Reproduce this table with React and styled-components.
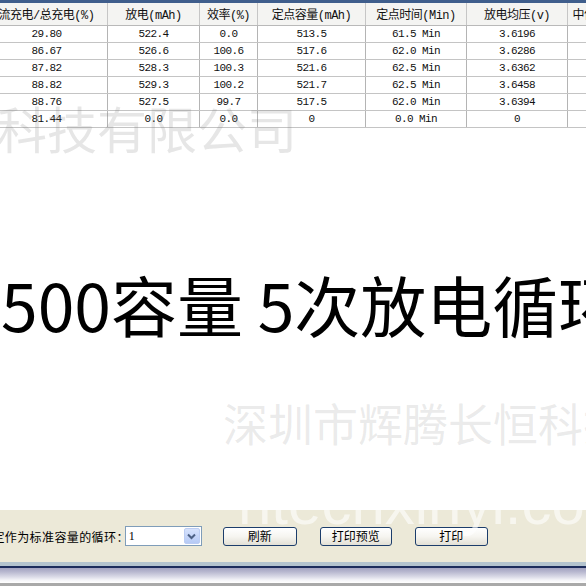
import React from 'react'
import styled, { createGlobalStyle } from 'styled-components'

const GlobalStyle = createGlobalStyle`
	html, body {
		margin: 0;
		padding: 0;
		background: #fff;
	}
	body {
		font-family: 'Noto Sans CJK SC', sans-serif;
	}
`

const COLS = '122px 92px 58px 108px 101px 101px 76px'

const Page = styled.div`
	position: relative;
	width: 586px;
	height: 586px;
	overflow: hidden;
	display: flex;
	flex-direction: column;
	background: #fff;
`

const TopLine = styled.div`
	height: 3px;
	background: #3f5e8c;
	flex: none;
`

const Grid = styled.div`
	margin-left: -14px;
	flex: none;
`

const HeaderRow = styled.div`
	display: grid;
	grid-template-columns: ${COLS};
	height: 23px;
	box-sizing: border-box;
	background: #f4f4f2;
	border-bottom: 1px solid #b9b9b9;
`

const HeadCell = styled.div`
	display: flex;
	align-items: center;
	justify-content: center;
	border-right: 1px solid #c6c6c6;
	font-family: 'Liberation Mono', 'Noto Sans CJK SC', monospace;
	font-size: 12px;
	letter-spacing: -0.5px;
	color: #111;
	white-space: nowrap;
	overflow: hidden;
`

const DataRow = styled.div`
	display: grid;
	grid-template-columns: ${COLS};
	height: 17px;
	box-sizing: border-box;
	border-bottom: 1px solid #c4c4c4;
`

const Cell = styled.div`
	display: flex;
	align-items: center;
	justify-content: center;
	border-right: 1px solid #b4b4b4;
	font-family: 'Liberation Mono', monospace;
	font-size: 11px;
	letter-spacing: -0.6px;
	color: #111;
	white-space: nowrap;
	overflow: hidden;
`

const Canvas = styled.div`
	flex: 1;
	padding-top: 142px;
	box-sizing: border-box;
`

const BigText = styled.div`
	font-family: 'Noto Sans CJK SC', sans-serif;
	font-size: 66px;
	line-height: 1;
	color: #000;
	white-space: nowrap;
	margin-left: 1px;
`

const Toolbar = styled.div`
	height: 52px;
	flex: none;
	background: #ece9d8;
	display: flex;
	align-items: center;
	font-size: 12px;
	color: #000;
`

const Label = styled.span`
	margin-left: -20px;
	margin-right: -4px;
	white-space: nowrap;
	font-family: 'Noto Sans CJK SC', sans-serif;
	font-size: 12px;
	letter-spacing: 0.4px;
`

const Select = styled.div`
	width: 77px;
	height: 20px;
	box-sizing: border-box;
	border: 1px solid #7f9db9;
	background: #fff;
	display: flex;
	align-items: center;
	justify-content: space-between;
	padding: 0 1px 0 3px;
	font-family: 'Liberation Serif', serif;
	font-size: 12px;
	margin-right: 21px;
`

const Arrow = styled.div`
	width: 16px;
	height: 16px;
	box-sizing: border-box;
	border: 1px solid #bccdf3;
	border-radius: 2px;
	background: linear-gradient(#d6e2fc, #b6caf5);
	display: flex;
	align-items: center;
	justify-content: center;
`

const Button = styled.button`
	width: ${p => p.$w}px;
	height: 19px;
	margin-right: 23px;
	padding: 0;
	box-sizing: border-box;
	border: 1px solid #1c3d6b;
	border-radius: 3px;
	background: linear-gradient(#ffffff 0%, #f6f5f0 50%, #e3e0d6 100%);
	font-family: 'Noto Sans CJK SC', sans-serif;
	font-size: 12px;
	line-height: 1;
	color: #000;
`

const BottomFrame = styled.div`
	flex: none;
	height: 24px;
	background: linear-gradient(
		#b3c3ce 0px,
		#b3c3ce 4px,
		#1c2c5c 4px,
		#1c2c5c 6px,
		#a2a2c0 6px,
		#b9b9d0 10px,
		#dcdce8 15px,
		#f4f4f8 18px,
		#ffffff 21px,
		#a9a9a9 21px,
		#a9a9a9 24px
	);
`

const Watermark = styled.div`
	position: absolute;
	top: ${p => p.$top}px;
	left: ${p => p.$left}px;
	font-size: ${p => p.$size}px;
	font-family: ${p => (p.$latin ? "'Liberation Sans', sans-serif" : "'Noto Sans CJK SC', sans-serif")};
	line-height: 1;
	color: ${p => p.$color};
	white-space: nowrap;
	pointer-events: none;
`

const headers = [
	'流充电/总充电(%)',
	'放电(mAh)',
	'效率(%)',
	'定点容量(mAh)',
	'定点时间(Min)',
	'放电均压(v)',
	'中位电压(v)',
]

const rows = [
	['29.80', '522.4', '0.0', '513.5', '61.5 Min', '3.6196', '3.6'],
	['86.67', '526.6', '100.6', '517.6', '62.0 Min', '3.6286', '3.6'],
	['87.82', '528.3', '100.3', '521.6', '62.5 Min', '3.6362', '3.6'],
	['88.82', '529.3', '100.2', '521.7', '62.5 Min', '3.6458', '3.6'],
	['88.76', '527.5', '99.7', '517.5', '62.0 Min', '3.6394', '3.6'],
	['81.44', '0.0', '0.0', '0', '0.0 Min', '0', ''],
]

const Chevron = () => (
	<svg width='9' height='7' viewBox='0 0 9 7'>
		<path d='M1 1.5 L4.5 5 L8 1.5' fill='none' stroke='#4d6185' strokeWidth='2' />
	</svg>
)

export default function App() {
	return (
		<>
			<GlobalStyle />
			<Page>
				<TopLine />
				<Grid>
					<HeaderRow>
						{headers.map(h => (
							<HeadCell key={h}>{h}</HeadCell>
						))}
					</HeaderRow>
					{rows.map((r, i) => (
						<DataRow key={i}>
							{r.map((v, j) => (
								<Cell key={j}>{v}</Cell>
							))}
						</DataRow>
					))}
				</Grid>
				<Canvas>
					<BigText>500容量 5次放电循环</BigText>
				</Canvas>
				<Toolbar>
					<Label>设定作为标准容量的循环：</Label>
					<Select>
						1
						<Arrow>
							<Chevron />
						</Arrow>
					</Select>
					<Button $w={74}>刷新</Button>
					<Button $w={72}>打印预览</Button>
					<Button $w={73}>打印</Button>
				</Toolbar>
				<BottomFrame />
				<Watermark $top={102} $left={-3} $size={50} $color='rgba(130,130,130,0.2)'>
					科技有限公司
				</Watermark>
				<Watermark $top={400} $left={223} $size={45} $color='rgba(130,130,130,0.17)'>
					深圳市辉腾长恒科技有限公司
				</Watermark>
				<Watermark $latin $top={474} $left={238} $size={60} $color='rgba(255,255,255,0.6)'>
					htechxinyi.com
				</Watermark>
			</Page>
		</>
	)
}
